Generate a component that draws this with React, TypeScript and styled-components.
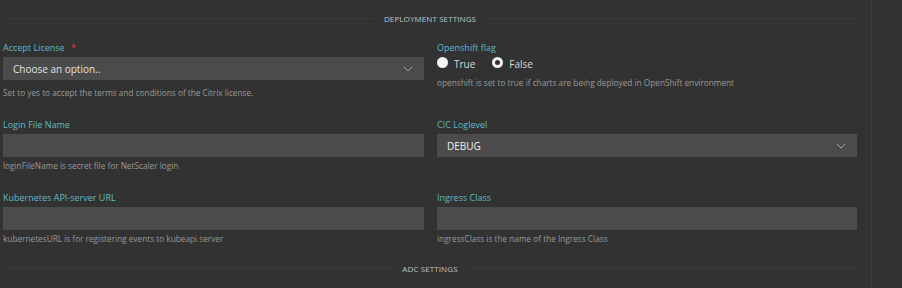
import styled, { createGlobalStyle } from "styled-components";
import { ChevronDown } from "lucide-react";

const GlobalStyle = createGlobalStyle`
  html, body {
    margin: 0;
    background: #323232;
    font-family: "Open Sans", "Noto Sans", sans-serif;
  }
`;

const SectionTitle = ({ title }: { title: string }) => (
  <SectionHeader>
    <Rule />
    <SectionText>{title}</SectionText>
    <Rule />
  </SectionHeader>
);

const App = () => {
  return (
    <>
      <GlobalStyle />
      <Page>
        <Main>
          <SectionTitle title="DEPLOYMENT SETTINGS" />
          <FieldGrid>
            <Field>
              <Label>
                Accept License <Required>*</Required>
              </Label>
              <SelectBox $spaced>
                <SelectText $muted>Choose an option..</SelectText>
                <ChevronDown size={16} strokeWidth={1.3} />
              </SelectBox>
              <Help>Set to yes to accept the terms and conditions of the Citrix license.</Help>
            </Field>

            <Field>
              <Label>Openshift flag</Label>
              <RadioRow>
                <RadioOption>
                  <RadioDot $checked={false} />
                  True
                </RadioOption>
                <RadioOption>
                  <RadioDot $checked />
                  False
                </RadioOption>
              </RadioRow>
              <Help>openshift is set to true if charts are being deployed in OpenShift environment</Help>
            </Field>

            <Field>
              <Label>Login File Name</Label>
              <TextBox />
              <Help>loginFileName is secret file for NetScaler login</Help>
            </Field>

            <Field>
              <Label>CIC Loglevel</Label>
              <SelectBox>
                <SelectText>DEBUG</SelectText>
                <ChevronDown size={16} strokeWidth={1.3} />
              </SelectBox>
            </Field>

            <Field>
              <Label>Kubernetes API-server URL</Label>
              <TextBox />
              <Help>kubernetesURL is for registering events to kubeapi server</Help>
            </Field>

            <Field>
              <Label>Ingress Class</Label>
              <TextBox />
              <Help>ingressClass is the name of the Ingress Class</Help>
            </Field>
          </FieldGrid>
          <SectionTitle title="ADC SETTINGS" />
        </Main>
        <SideGutter />
      </Page>
    </>
  );
};

export default App;

const Page = styled.div`
  display: flex;
  height: 288px;
  overflow: hidden;
`;

const Main = styled.div`
  width: 854px;
  padding: 11px 14px 0 3px;
  border-right: 1px solid #3d3d3d;
`;

const SideGutter = styled.div`
  flex: 1;
`;

const SectionHeader = styled.div`
  display: flex;
  align-items: center;
  gap: 9px;
  height: 14px;
`;

const Rule = styled.div`
  flex: 1;
  height: 1px;
  background: #3a3a3a;
`;

const SectionText = styled.span`
  font-size: 8px;
  color: #bcc6cc;
  letter-spacing: 0.1px;
`;

const FieldGrid = styled.div`
  display: grid;
  grid-template-columns: 421px 420px;
  column-gap: 13px;
  grid-template-rows: 77px 73px 62px;
  margin-top: 16px;
  margin-bottom: 8px;
`;

const Field = styled.div`
  display: flex;
  flex-direction: column;
`;

const Label = styled.div`
  font-size: 9px;
  line-height: 14px;
  height: 14px;
  color: #5fb9c9;
  margin-bottom: 2px;
`;

const Required = styled.span`
  color: #e0393e;
  margin-left: 4px;
`;

const TextBox = styled.div`
  height: 23px;
  background: #4b4b4b;
`;

const SelectBox = styled.div<{ $spaced?: boolean }>`
  height: 23px;
  background: #4b4b4b;
  display: flex;
  align-items: center;
  justify-content: space-between;
  padding: 0 8px 0 10px;
  margin-bottom: ${({ $spaced }) => ($spaced ? "4px" : "0")};
  color: #b0b0b0;
`;

const SelectText = styled.span<{ $muted?: boolean }>`
  font-size: 10px;
  color: ${({ $muted }) => ($muted ? "#e4e4e4" : "#f2f2f2")};
`;

const Help = styled.div`
  font-size: 8.25px;
  line-height: 12px;
  color: #999999;
  margin-top: 3px;
`;

const RadioRow = styled.div`
  display: flex;
  gap: 17px;
  height: 20px;
  margin-top: -4px;
  margin-bottom: 1px;
  align-items: center;
`;

const RadioOption = styled.div`
  display: flex;
  align-items: center;
  gap: 6px;
  font-size: 10px;
  color: #dadada;
  padding-top: 2px;
`;

const RadioDot = styled.span<{ $checked: boolean }>`
  width: 11px;
  height: 11px;
  border-radius: 50%;
  box-sizing: border-box;
  background: ${({ $checked }) => ($checked ? "#323232" : "#f4f4f4")};
  border: ${({ $checked }) => ($checked ? "3px solid #f4f4f4" : "none")};
  margin-top: -4px;
`;
